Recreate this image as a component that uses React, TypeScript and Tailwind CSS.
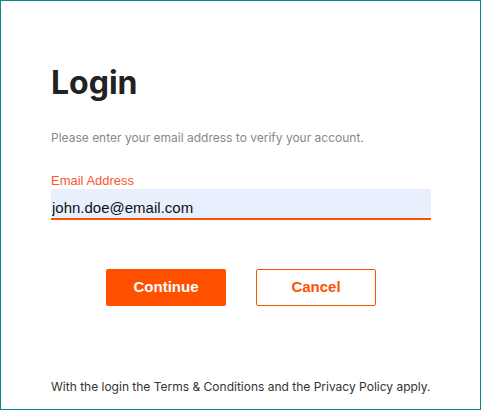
export default function App() {
  return (
    <div className="w-[481px] h-[410px] bg-white border border-[#0a8a87] pl-[50px] pr-[49px] pt-[66px] flex flex-col">
      <h1 className="text-[32px] leading-[32px] font-bold text-[#222222] font-['Inter',sans-serif]">Login</h1>

      <p className="mt-[31px] text-[12px] leading-[16px] text-[#888888] font-['Inter',sans-serif]">
        Please enter your email address to verify your account.
      </p>

      {/* Email field */}
      <label className="mt-[27px] block text-[13px] leading-[15px] text-[#ff5533] font-['Liberation_Sans',Arial,sans-serif]">
        Email Address
      </label>
      <input
        type="email"
        readOnly
        defaultValue="john.doe@email.com"
        className="mt-[1px] w-full h-[31px] pt-[8px] pb-0 pl-[1px] bg-[#e8f0fe] border-b-2 border-[#ff5000] text-[15px] text-[#111111] outline-none font-['Liberation_Sans',Arial,sans-serif]"
      />

      {/* Actions */}
      <div className="mt-[49px] flex justify-center gap-[30px] font-['Liberation_Sans',Arial,sans-serif]">
        <button className="w-[120px] h-[37px] rounded-[2px] bg-[#ff5000] text-white text-[15px] font-bold">
          Continue
        </button>
        <button className="w-[120px] h-[37px] rounded-[2px] border border-[#ff5000] bg-white text-[#ff5000] text-[15px] font-bold">
          Cancel
        </button>
      </div>

      <p className="mt-auto mb-[14px] text-[12px] leading-[16px] text-[#333333] font-['Inter',sans-serif]">
        With the login the Terms &amp; Conditions and the Privacy Policy apply.
      </p>
    </div>
  );
}
